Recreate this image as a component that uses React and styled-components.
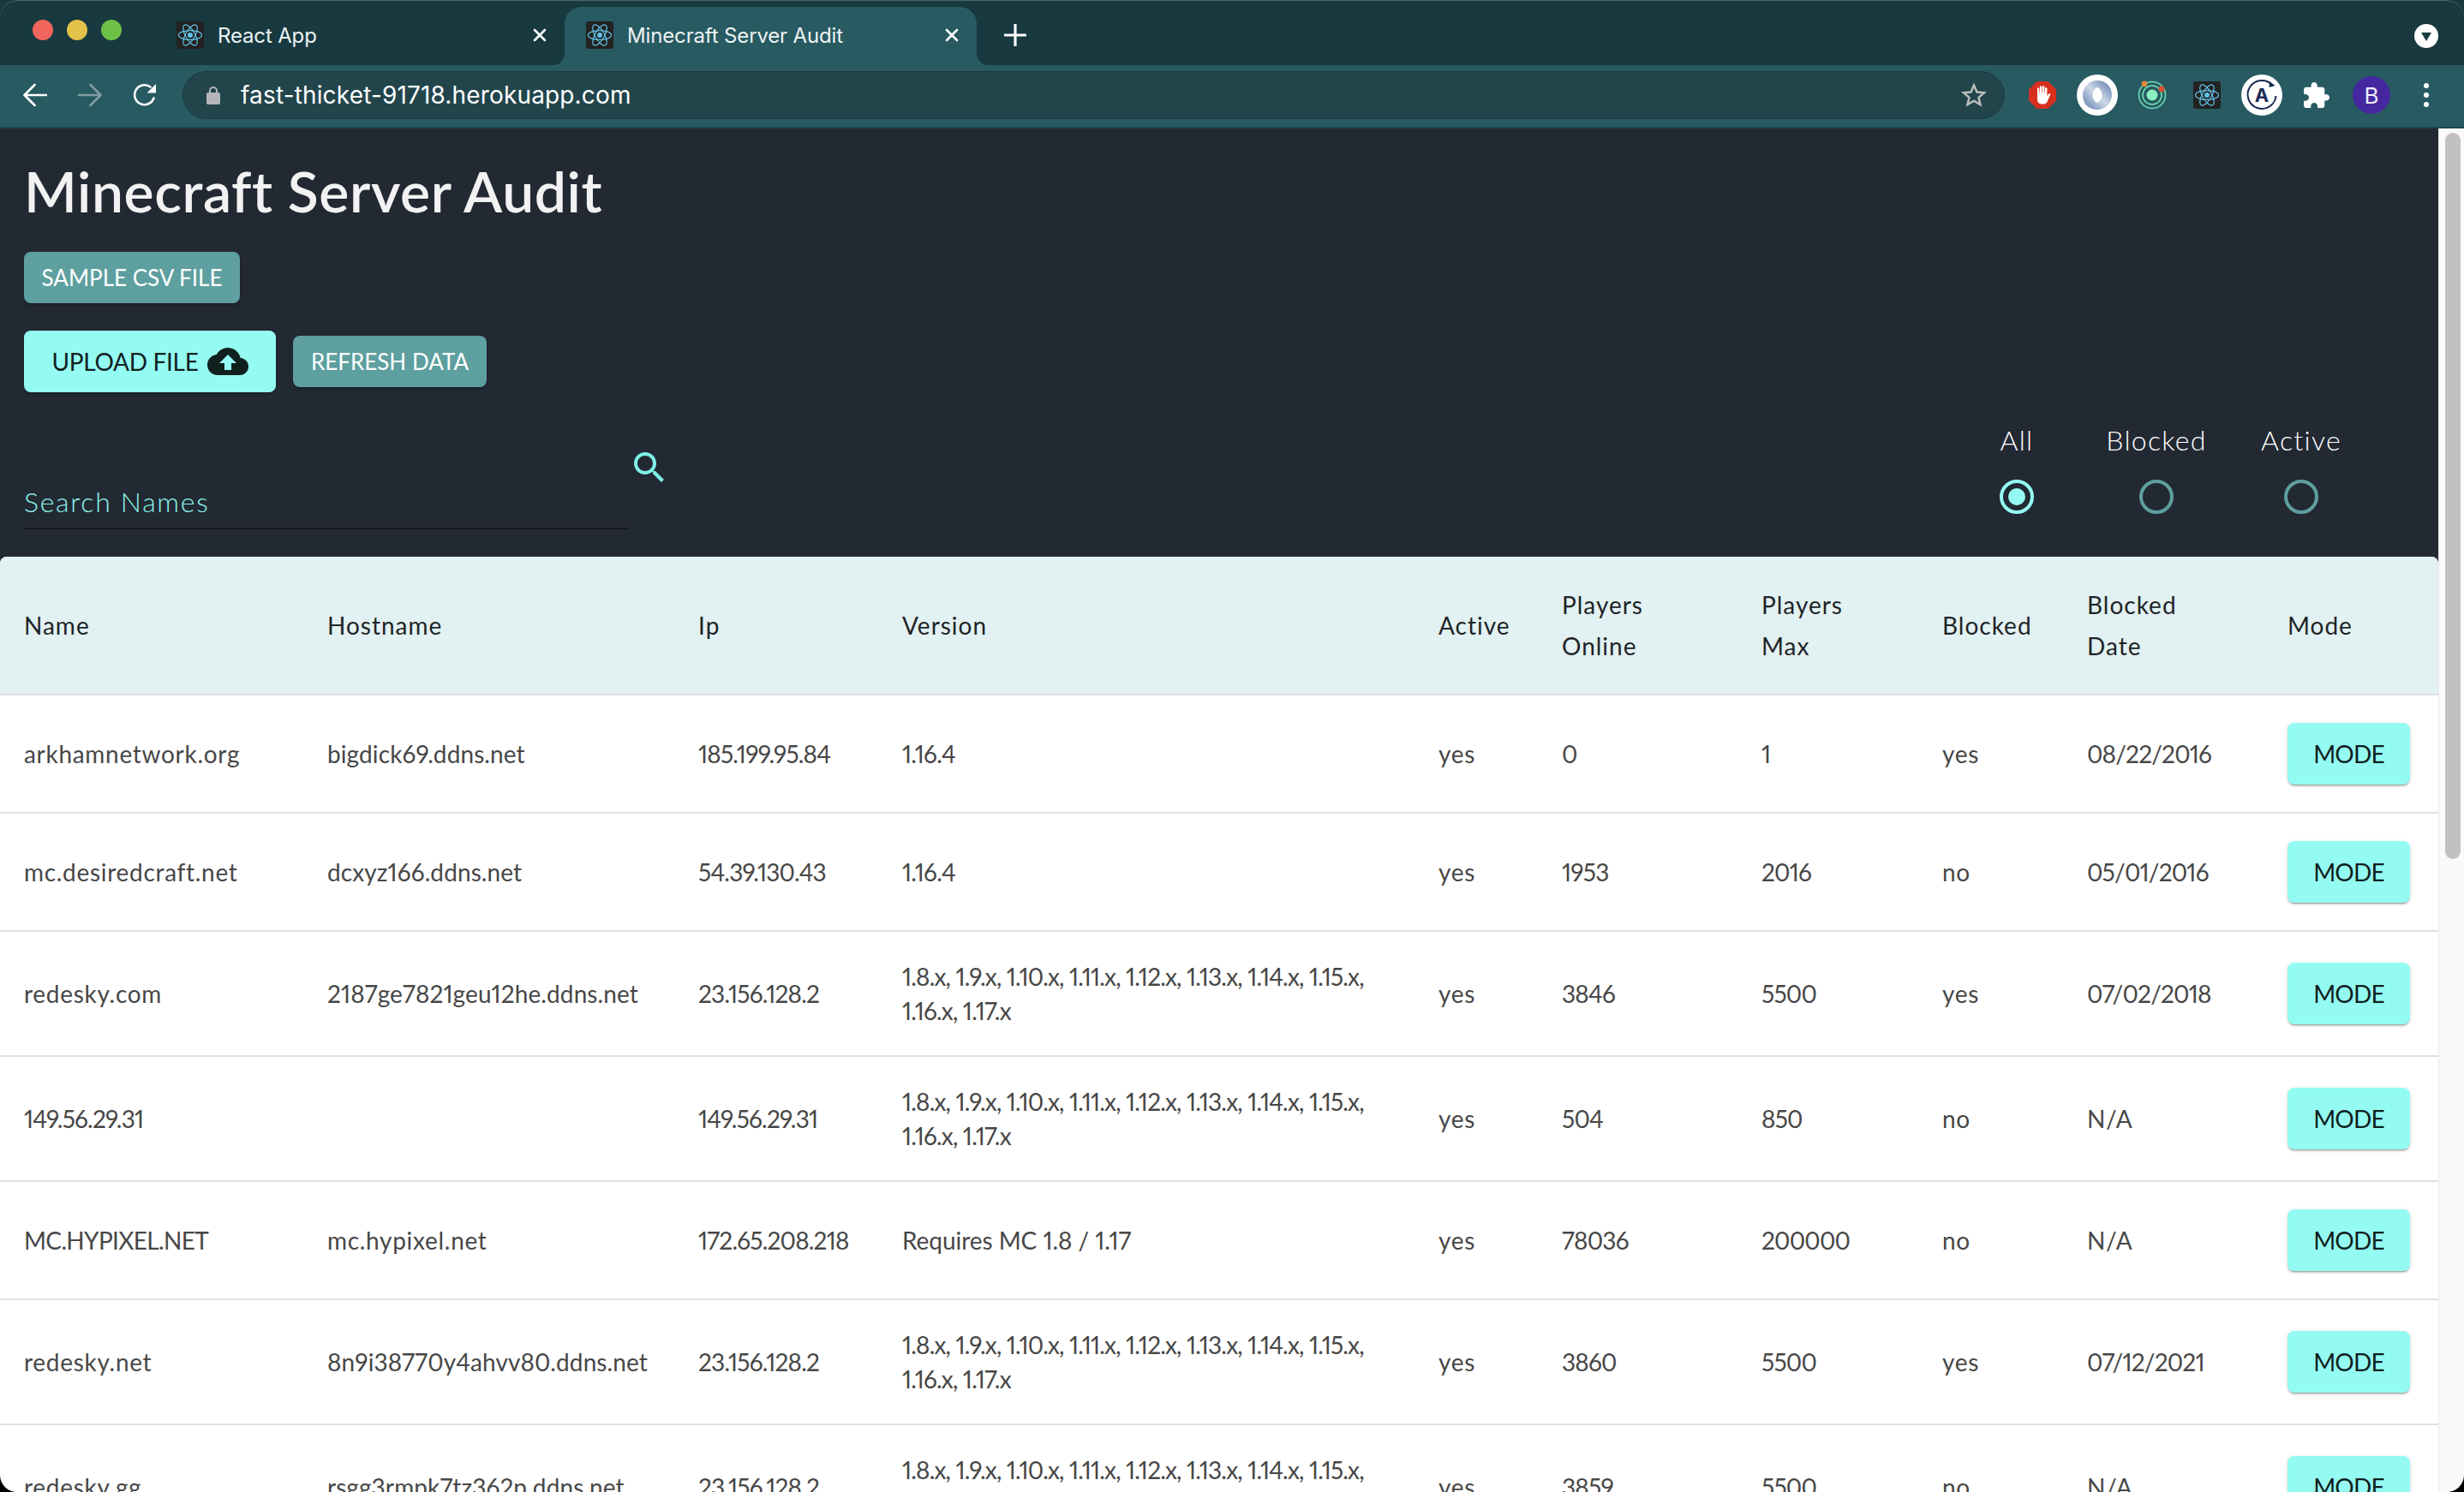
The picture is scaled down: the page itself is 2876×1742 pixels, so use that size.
import styled, { createGlobalStyle } from "styled-components";

const GlobalStyle = createGlobalStyle`
    html, body {
        margin: 0;
        height: 100%;
        overflow: hidden;
        background: linear-gradient(#17393f 50%, #000 50%);
    }
    * {
        box-sizing: border-box;
    }
`

const Window = styled.div`
    width: 2876px;
    height: 1742px;
    display: flex;
    flex-direction: column;
    border-radius: 20px;
    overflow: hidden;
    font-family: "Lato", "Liberation Sans", sans-serif;
    font-variant-numeric: proportional-nums;
`

const TitleBar = styled.div`
    height: 76px;
    flex: none;
    display: flex;
    align-items: flex-end;
    padding-left: 38px;
    background: #17393f;
    box-shadow: inset 0 1px 1px rgba(255, 255, 255, 0.25);
    border-radius: 20px 20px 0 0;
`

const Lights = styled.div`
    display: flex;
    gap: 16px;
    align-self: flex-start;
    margin-top: 23px;
    margin-right: 39px;
`

const Light = styled.span`
    width: 24px;
    height: 24px;
    border-radius: 50%;
    background: ${({ $c }) => $c};
`

const Tab = styled.div`
    position: relative;
    width: ${({ $w }) => $w};
    height: 68px;
    display: flex;
    align-items: center;
    gap: 16px;
    padding: 0 21px 2px 25px;
    border-radius: 20px 20px 0 0;
    background: ${({ $active }) => ($active ? "#285a62" : "transparent")};
    color: #edf3f3;
    font-family: "Inter", sans-serif;
    font-size: 24px;
    letter-spacing: -0.15px;
    &::before, &::after {
        content: "";
        display: ${({ $active }) => ($active ? "block" : "none")};
        position: absolute;
        bottom: 0;
        width: 14px;
        height: 14px;
    }
    &::before {
        left: -14px;
        background: radial-gradient(circle at 0 0, transparent 14px, #285a62 14.5px);
    }
    &::after {
        right: -14px;
        background: radial-gradient(circle at 100% 0, transparent 14px, #285a62 14.5px);
    }
`

const TabTitle = styled.span`
    flex: 1;
    white-space: nowrap;
`

const NewTab = styled.svg`
    width: 26px;
    height: 26px;
    margin: 0 0 22px 32px;
`

const TabMenu = styled.div`
    width: 28px;
    height: 28px;
    margin: 0 30px 20px auto;
    border-radius: 50%;
    background: #fff;
    display: flex;
    align-items: center;
    justify-content: center;
    &::after {
        content: "";
        border-style: solid;
        border-width: 10px 6.5px 0;
        border-color: #17393f transparent transparent;
        margin-top: 2px;
    }
`

const ToolBar = styled.div`
    height: 74px;
    flex: none;
    display: flex;
    align-items: center;
    padding: 0 12px 2px 27px;
    background: #285a62;
    border-bottom: 2px solid #1f474e;
`

const NavIcon = styled.svg`
    width: 28px;
    height: 28px;
    flex: none;
    margin-right: ${({ $mr }) => $mr};
    fill: none;
    stroke: ${({ $dim }) => ($dim ? "#7f9ea2" : "#fff")};
    stroke-width: 2.6;
    stroke-linecap: round;
    stroke-linejoin: round;
`

const Omnibox = styled.div`
    flex: 1;
    height: 56px;
    margin-right: 12px;
    display: flex;
    align-items: center;
    gap: 24px;
    padding: 0 20px 0 27px;
    border-radius: 28px;
    background: #22454c;
    border: 1.5px solid #1c3a40;
    color: #fff;
    font-family: "Inter", sans-serif;
    font-size: 28px;
    letter-spacing: 0.15px;
`

const Url = styled.span`
    flex: 1;
`

const ExtSlot = styled.div`
    width: 64px;
    height: 48px;
    flex: none;
    display: flex;
    align-items: center;
    justify-content: center;
`

const Avatar = styled.div`
    width: 44px;
    height: 44px;
    border-radius: 50%;
    background: #4527a0;
    color: #f0ecfa;
    font-family: "Inter", sans-serif;
    font-size: 26px;
    display: flex;
    align-items: center;
    justify-content: center;
`

const Kebab = styled.div`
    display: flex;
    flex-direction: column;
    gap: 5px;
    span {
        width: 6px;
        height: 6px;
        border-radius: 50%;
        background: #fff;
    }
`

const Viewport = styled.div`
    flex: 1;
    min-height: 0;
    display: flex;
`

const Page = styled.div`
    flex: 1;
    min-width: 0;
    overflow: hidden;
    background: #222933;
`

const Scrollbar = styled.div`
    width: 30px;
    flex: none;
    padding: 5px 4px 0 7px;
    background: #fafafa;
    border-left: 1px solid #e8e8e8;
`

const Thumb = styled.div`
    height: 848px;
    border-radius: 9px;
    background: #c1c1c1;
`

const Header = styled.div`
    padding-left: 28px;
`

const Title = styled.h1`
    margin: 0;
    padding-top: 33px;
    font-size: 66px;
    line-height: 80px;
    font-weight: 600;
    letter-spacing: 0.6px;
    color: #f2f2f2;
`

const ActionRow = styled.div`
    display: flex;
    align-items: center;
    gap: 20px;
    margin-top: ${({ $mt }) => $mt};
`

const MutedButton = styled.button`
    height: 60px;
    width: ${({ $w }) => $w};
    padding: 0;
    border: 0;
    border-radius: 8px;
    background: #5e9f9f;
    color: #fff;
    font-family: inherit;
    font-size: 26px;
    font-weight: 400;
    letter-spacing: 0;
    box-shadow: 0 3px 3px -2px rgba(0, 0, 0, 0.2), 0 2px 4px rgba(0, 0, 0, 0.14);
`

const UploadButton = styled.button`
    height: 72px;
    width: 294px;
    display: flex;
    align-items: center;
    justify-content: center;
    gap: 10px;
    border: 0;
    border-radius: 8px;
    background: #94fbf2;
    color: #10201f;
    font-family: inherit;
    font-size: 28px;
    letter-spacing: -0.3px;
    box-shadow: 0 3px 3px -2px rgba(0, 0, 0, 0.2), 0 2px 4px rgba(0, 0, 0, 0.14);
    padding: 0;
`

const CloudIcon = styled.svg`
    width: 48px;
    height: 48px;
    fill: #10201f;
`

const FilterRow = styled.div`
    display: flex;
    justify-content: space-between;
    padding: 0 116px 32px 0;
`

const Search = styled.div`
    display: flex;
    align-items: flex-start;
    padding-top: 64px;
`

const Field = styled.div`
    width: 706px;
    height: 96px;
    display: flex;
    align-items: flex-end;
    padding-bottom: 11px;
    border-bottom: 2px solid #14181f;
    color: #8cf5ec;
    font-size: 32px;
    font-weight: 300;
    letter-spacing: 1.7px;
`

const SearchIcon = styled.svg`
    width: 48px;
    height: 48px;
    fill: #7ff0e6;
`

const Radios = styled.div`
    display: flex;
    gap: 68px;
    padding-top: 36px;
`

const RadioOption = styled.div`
    width: ${({ $w }) => $w};
    display: flex;
    flex-direction: column;
    align-items: center;
    gap: 26px;
    color: #fff;
    font-size: 32px;
    line-height: 40px;
    font-weight: 300;
    letter-spacing: 1.3px;
`

const RadioMark = styled.span`
    width: 40px;
    height: 40px;
    border-radius: 50%;
    border: 4px solid ${({ $on }) => ($on ? "#94fbf2" : "#5e9f9f")};
    display: flex;
    align-items: center;
    justify-content: center;
    &::after {
        content: "";
        display: ${({ $on }) => ($on ? "block" : "none")};
        width: 20px;
        height: 20px;
        border-radius: 50%;
        background: #94fbf2;
    }
`

const Table = styled.table`
    width: 2846px;
    table-layout: fixed;
    border-collapse: separate;
    border-spacing: 0;
    background: #fff;
    border-radius: 8px 8px 0 0;
    overflow: hidden;
`

const HeadCell = styled.th`
    padding: 32px 28px;
    background: #e2f1f1;
    border-bottom: 2px solid #e0e0e0;
    text-align: left;
    vertical-align: middle;
    color: #1e2428;
    font-size: 28px;
    line-height: 48px;
    font-weight: 400;
    letter-spacing: 1px;
`

const HeadLine = styled.div`
    white-space: nowrap;
`

const Cell = styled.td`
    padding: 32px 28px;
    border-bottom: 2px solid #e0e0e0;
    vertical-align: middle;
    color: #474747;
    font-size: 28px;
    line-height: 40px;
    font-weight: 400;
    letter-spacing: ${({ $ls }) => $ls};
`

const ModeButton = styled.button`
    display: block;
    width: 143px;
    height: 72px;
    padding: 0;
    border: 0;
    border-radius: 8px;
    background: #94fbf2;
    color: #10201f;
    font-family: inherit;
    font-size: 28px;
    letter-spacing: -0.8px;
    box-shadow: 0 3px 1px -2px rgba(0, 0, 0, 0.2), 0 2px 2px rgba(0, 0, 0, 0.14), 0 1px 5px rgba(0, 0, 0, 0.12);
`

const widths = [354, 433, 238, 626, 144, 233, 211, 169, 234, 204];

const headings = ["Name", "Hostname", "Ip", "Version", "Active", "Players Online", "Players Max", "Blocked", "Blocked Date", "Mode"];

const allVersions = "1.8.x, 1.9.x, 1.10.x, 1.11.x, 1.12.x, 1.13.x, 1.14.x, 1.15.x, 1.16.x, 1.17.x";

const servers = [
    ["arkhamnetwork.org", "bigdick69.ddns.net", "185.199.95.84", "1.16.4", "yes", "0", "1", "yes", "08/22/2016"],
    ["mc.desiredcraft.net", "dcxyz166.ddns.net", "54.39.130.43", "1.16.4", "yes", "1953", "2016", "no", "05/01/2016"],
    ["redesky.com", "2187ge7821geu12he.ddns.net", "23.156.128.2", allVersions, "yes", "3846", "5500", "yes", "07/02/2018"],
    ["149.56.29.31", "", "149.56.29.31", allVersions, "yes", "504", "850", "no", "N/A"],
    ["MC.HYPIXEL.NET", "mc.hypixel.net", "172.65.208.218", "Requires MC 1.8 / 1.17", "yes", "78036", "200000", "no", "N/A"],
    ["redesky.net", "8n9i38770y4ahvv80.ddns.net", "23.156.128.2", allVersions, "yes", "3860", "5500", "yes", "07/12/2021"],
    ["redesky.gg", "rsgg3rmpk7tz362p.ddns.net", "23.156.128.2", allVersions, "yes", "3859", "5500", "no", "N/A"],
];

// digit heavy values run tighter than plain words, the font is not the original one
const spacing = (value) => {
    if (/^[\d./]+$/.test(value)) return "-0.8px";
    if (value === allVersions) return "-0.82px";
    if (value.endsWith("ddns.net")) return "0.1px";
    if (value.startsWith("Requires")) return "-0.05px";
    if (value === value.toUpperCase() && value.length > 3) return "-0.65px";
    return "0.7px";
};

const ReactMark = ({ size = 32 }) => (
    <svg width={size} height={size} viewBox="0 0 32 32" style={{ flex: "none" }}>
        <rect width="32" height="32" rx="3" fill="#222" />
        <g fill="none" stroke="#61c3e8" strokeWidth="1.2">
            <ellipse cx="16" cy="16" rx="13.5" ry="5.4" />
            <ellipse cx="16" cy="16" rx="13.5" ry="5.4" transform="rotate(60 16 16)" />
            <ellipse cx="16" cy="16" rx="13.5" ry="5.4" transform="rotate(120 16 16)" />
        </g>
        <circle cx="16" cy="16" r="3" fill="#61c3e8" />
    </svg>
);

const Close = () => (
    <svg width="16" height="16" viewBox="0 0 16 16" style={{ flex: "none" }}>
        <path d="M2 2 L14 14 M14 2 L2 14" stroke="#fff" strokeWidth="2.6" strokeLinecap="round" />
    </svg>
);

const App = () => {

    return (
        <Window>
            <GlobalStyle />
            <TitleBar>
                <Lights>
                    <Light $c="#f1665c" />
                    <Light $c="#e3c24a" />
                    <Light $c="#6dc046" />
                </Lights>
                <Tab $w="478px">
                    <ReactMark />
                    <TabTitle>React App</TabTitle>
                    <Close />
                </Tab>
                <Tab $w="481px" $active>
                    <ReactMark />
                    <TabTitle>Minecraft Server Audit</TabTitle>
                    <Close />
                </Tab>
                <NewTab viewBox="0 0 26 26">
                    <path d="M13 1 V25 M1 13 H25" stroke="#fff" strokeWidth="3.2" strokeLinecap="round" />
                </NewTab>
                <TabMenu />
            </TitleBar>
            <ToolBar>
                <NavIcon viewBox="0 0 28 28" $mr="36px">
                    <path d="M27 14 H1.5 M13.5 2 L1.5 14 L13.5 26" />
                </NavIcon>
                <NavIcon viewBox="0 0 28 28" $mr="36px" $dim>
                    <path d="M1 14 H26.5 M14.5 2 L26.5 14 L14.5 26" />
                </NavIcon>
                <NavIcon viewBox="0 0 28 28" $mr="30px">
                    <path d="M24.5 17.5 A11.5 11.5 0 1 1 20.5 4.5" />
                    <path d="M27 1 V11.5 H16.5 Z" fill="#fff" stroke="none" />
                </NavIcon>
                <Omnibox>
                    <svg width="16" height="22" viewBox="0 0 16 22" style={{ flex: "none" }}>
                        <path d="M4 10 V6 a4 4 0 0 1 8 0 V10" fill="none" stroke="#b4b6ba" strokeWidth="2" />
                        <rect y="8" width="16" height="14" rx="2" fill="#b4b6ba" />
                    </svg>
                    <Url>fast-thicket-91718.herokuapp.com</Url>
                    <svg width="30" height="30" viewBox="0 0 24 24" fill="none" stroke="#bdbdbd" strokeWidth="2">
                        <path d="M12 2.8 L14.8 9.2 L21.6 9.8 L16.4 14.3 L18 21 L12 17.4 L6 21 L7.6 14.3 L2.4 9.8 L9.2 9.2 Z" />
                    </svg>
                </Omnibox>
                <ExtSlot>
                    <svg width="32" height="32" viewBox="0 0 32 32">
                        <path d="M9.5 0 H22.5 L32 9.5 V22.5 L22.5 32 H9.5 L0 22.5 V9.5 Z" fill="#d62f20" />
                        <path d="M10 14 V8.5 a1.2 1.2 0 0 1 2.4 0 V13 h.6 V6.5 a1.2 1.2 0 0 1 2.4 0 V13 h.6 V6.5 a1.2 1.2 0 0 1 2.4 0 V13.5 h.6 V8.5 a1.2 1.2 0 0 1 2.4 0 V17 l2 -2.6 c1 -1 2.4 0 1.8 1.2 L21.5 24 c-.8 1.4 -2 2.4 -4 2.4 h-2.5 C12 26.4 10 24.4 10 21 Z" fill="#fff" />
                    </svg>
                </ExtSlot>
                <ExtSlot>
                    <svg width="48" height="48" viewBox="0 0 48 48">
                        <defs>
                            <linearGradient id="jsonRing" x1="0.9" y1="0.1" x2="0.1" y2="0.9">
                                <stop offset="0" stopColor="#6f8db8" />
                                <stop offset="0.5" stopColor="#cfd8e8" />
                                <stop offset="1" stopColor="#6f8db8" />
                            </linearGradient>
                        </defs>
                        <circle cx="24" cy="24" r="24" fill="#fff" />
                        <path fillRule="evenodd" d="M24 7 C35 7 41 15 41 24 C41 33 34 41 24 41 C13 41 7 33 7 24 C7 15 14 7 24 7 Z M24 15 C20 17 18.5 21 18.5 24 C18.5 28 21 32 24 33 C28 31 29.5 27 29.5 24 C29.5 20 27 16 24 15 Z" fill="url(#jsonRing)" />
                    </svg>
                </ExtSlot>
                <ExtSlot>
                    <svg width="34" height="34" viewBox="0 0 34 34" fill="none">
                        <circle cx="17" cy="17" r="15.5" stroke="#6fdcb4" strokeWidth="1.6" />
                        <circle cx="17" cy="17" r="11" stroke="#6fdcb4" strokeWidth="1.6" />
                        <circle cx="17" cy="17" r="6.5" fill="#8cf0bc" />
                        <circle cx="8" cy="4" r="3.4" fill="#e08a3c" />
                        <circle cx="28" cy="10" r="3.4" fill="#d9532c" />
                    </svg>
                </ExtSlot>
                <ExtSlot>
                    <ReactMark />
                </ExtSlot>
                <ExtSlot>
                    <svg width="48" height="48" viewBox="0 0 48 48" fill="none">
                        <circle cx="24" cy="24" r="24" fill="#fff" />
                        <path d="M36 12 A16.5 16.5 0 1 0 40.5 25" stroke="#1b2a55" strokeWidth="2" />
                        <path d="M33 8 L39.5 13 L32.5 15 Z" fill="#1b2a55" />
                        <text x="24" y="32" textAnchor="middle" fontFamily="Inter, sans-serif" fontWeight="700" fontSize="22" fill="#1b2a55">A</text>
                    </svg>
                </ExtSlot>
                <ExtSlot>
                    <svg width="30" height="30" viewBox="2 1 21 21" fill="#fff">
                        <path d="M20.5 11H19V7c0-1.1-.9-2-2-2h-4V3.5C13 2.12 11.88 1 10.5 1S8 2.12 8 3.5V5H4c-1.1 0-1.99.9-1.99 2v3.8H3.5c1.49 0 2.7 1.21 2.7 2.7s-1.21 2.7-2.7 2.7H2V20c0 1.1.9 2 2 2h3.8v-1.5c0-1.49 1.21-2.7 2.7-2.7 1.49 0 2.7 1.21 2.7 2.7V22H17c1.1 0 2-.9 2-2v-4h1.5c1.38 0 2.5-1.12 2.5-2.5S21.88 11 20.5 11z" />
                    </svg>
                </ExtSlot>
                <ExtSlot>
                    <Avatar>B</Avatar>
                </ExtSlot>
                <ExtSlot>
                    <Kebab><span /><span /><span /></Kebab>
                </ExtSlot>
            </ToolBar>
            <Viewport>
                <Page>
                    <Header>
                        <Title>Minecraft Server Audit</Title>
                        <ActionRow $mt="31px">
                            <MutedButton $w="252px">SAMPLE CSV FILE</MutedButton>
                        </ActionRow>
                        <ActionRow $mt="32px">
                            <UploadButton>
                                UPLOAD FILE
                                <CloudIcon viewBox="0 0 24 24">
                                    <path d="M19.35 10.04C18.67 6.59 15.64 4 12 4 9.11 4 6.6 5.64 5.35 8.04 2.34 8.36 0 10.91 0 14c0 3.31 2.69 6 6 6h13c2.76 0 5-2.24 5-5 0-2.64-2.05-4.78-4.65-4.96zM14 13v4h-4v-4H7l5-5 5 5h-3z" />
                                </CloudIcon>
                            </UploadButton>
                            <MutedButton $w="226px">REFRESH DATA</MutedButton>
                        </ActionRow>
                        <FilterRow>
                            <Search>
                                <Field>Search Names</Field>
                                <SearchIcon viewBox="0 0 24 24">
                                    <path d="M15.5 14h-.79l-.28-.27C15.41 12.59 16 11.11 16 9.5 16 5.91 13.09 3 9.5 3S3 5.91 3 9.5 5.91 16 9.5 16c1.61 0 3.09-.59 4.23-1.57l.27.28v.79l5 4.99L20.49 19l-4.99-5zm-6 0C7.01 14 5 11.99 5 9.5S7.01 5 9.5 5 14 7.01 14 9.5 11.99 14 9.5 14z" />
                                </SearchIcon>
                            </Search>
                            <Radios>
                                <RadioOption $w="76px">All<RadioMark $on /></RadioOption>
                                <RadioOption $w="114px">Blocked<RadioMark /></RadioOption>
                                <RadioOption $w="88px">Active<RadioMark /></RadioOption>
                            </Radios>
                        </FilterRow>
                    </Header>
                    <Table>
                        <colgroup>
                            {widths.map((w, i) => <col key={i} width={w} />)}
                        </colgroup>
                        <thead>
                            <tr>
                                {headings.map(h => (
                                    <HeadCell key={h}>
                                        {h.split(" ").map(word => <HeadLine key={word}>{word}</HeadLine>)}
                                    </HeadCell>
                                ))}
                            </tr>
                        </thead>
                        <tbody>
                            {servers.map(row => (
                                <tr key={row[0]}>
                                    {row.map((value, i) => <Cell key={i} $ls={spacing(value)}>{value}</Cell>)}
                                    <Cell><ModeButton>MODE</ModeButton></Cell>
                                </tr>
                            ))}
                        </tbody>
                    </Table>
                </Page>
                <Scrollbar>
                    <Thumb />
                </Scrollbar>
            </Viewport>
        </Window>
    )

}

export default App;
